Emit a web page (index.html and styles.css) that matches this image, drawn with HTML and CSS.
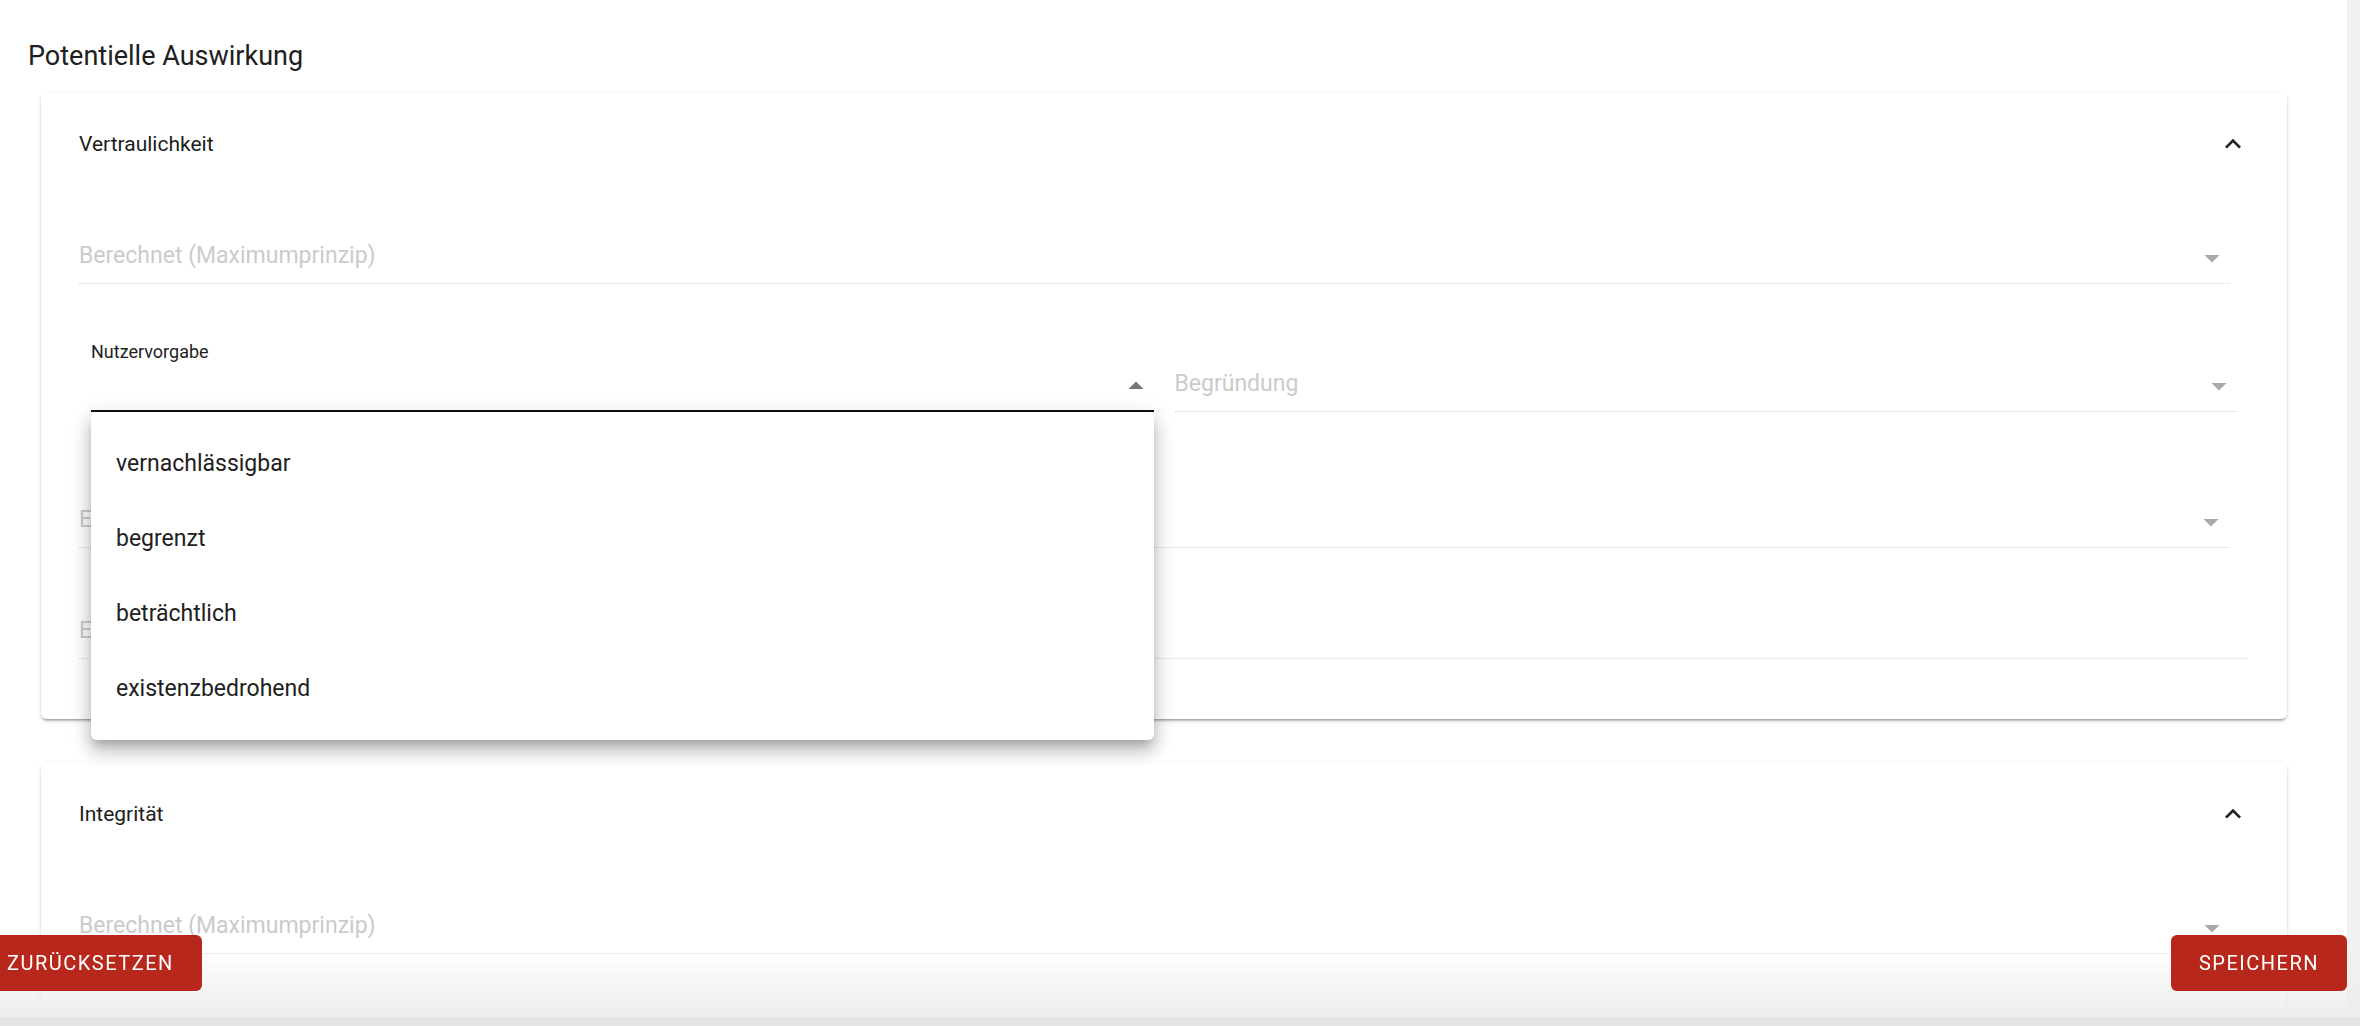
FILE: index.html
```html
<!DOCTYPE html>
<html lang="de">
<head>
    <meta charset="UTF-8">
    <meta name="viewport" content="width=device-width, initial-scale=1.0">
    <title>Potentielle Auswirkung</title>
    <link rel="stylesheet" href="styles.css">
</head>
<body>
    <div class="window">
        <div class="page">
            <h2 class="section-title">Potentielle Auswirkung</h2>

            <div class="panel">
                <div class="panel-head">
                    <span>Vertraulichkeit</span>
                    <svg class="expand" viewBox="0 0 24 24"><path d="M12 8l-6 6 1.41 1.41L12 10.83l4.59 4.58L18 14z"/></svg>
                </div>
                <div class="panel-body">
                    <div class="field calc">
                        <div class="input disabled">
                            <span class="placeholder">Berechnet (Maximumprinzip)</span>
                            <svg class="arrow" viewBox="0 0 24 24"><path d="M7 10l5 5 5-5z"/></svg>
                        </div>
                    </div>

                    <div class="field-row">
                        <div class="field user">
                            <label>Nutzervorgabe</label>
                            <div class="input focused">
                                <svg class="arrow open" viewBox="0 0 24 24"><path d="M7 14l5-5 5 5z"/></svg>
                            </div>
                            <ul class="menu">
                                <li>vernachlässigbar</li>
                                <li>begrenzt</li>
                                <li>beträchtlich</li>
                                <li>existenzbedrohend</li>
                            </ul>
                        </div>
                        <div class="field reason">
                            <div class="input disabled">
                                <span class="placeholder">Begründung</span>
                                <svg class="arrow" viewBox="0 0 24 24"><path d="M7 10l5 5 5-5z"/></svg>
                            </div>
                        </div>
                    </div>

                    <div class="field likelihood">
                        <div class="input disabled">
                            <span class="placeholder">Eintrittswahrscheinlichkeit</span>
                            <svg class="arrow" viewBox="0 0 24 24"><path d="M7 10l5 5 5-5z"/></svg>
                        </div>
                    </div>

                    <div class="field note">
                        <div class="input disabled">
                            <span class="placeholder">Erläuterung</span>
                        </div>
                    </div>
                </div>
            </div>

            <div class="panel open-end">
                <div class="panel-head">
                    <span>Integrität</span>
                    <svg class="expand" viewBox="0 0 24 24"><path d="M12 8l-6 6 1.41 1.41L12 10.83l4.59 4.58L18 14z"/></svg>
                </div>
                <div class="panel-body">
                    <div class="field calc">
                        <div class="input disabled">
                            <span class="placeholder">Berechnet (Maximumprinzip)</span>
                            <svg class="arrow" viewBox="0 0 24 24"><path d="M7 10l5 5 5-5z"/></svg>
                        </div>
                    </div>
                </div>
            </div>
        </div>
        <div class="scroll-track"></div>
    </div>

    <div class="actions">
        <div class="actions-bar">
            <button type="button" class="btn reset">Zurücksetzen</button>
            <button type="button" class="btn save">Speichern</button>
        </div>
        <div class="scroll-track-h"></div>
    </div>
</body>
</html>
```

FILE: styles.css
```css
html, body { margin: 0; height: 100%; overflow: hidden; background: #fff; }
body { font-family: Roboto, "Noto Sans", Arial, sans-serif; color: #212121; }

.window { display: flex; height: 100vh; }
.page { flex: 1; overflow: hidden; }
.scroll-track { width: 13px; background: #f1f1f1; }

.section-title { margin: 0; padding: 40px 0 0 28px; font-size: 27px; line-height: 32px; font-weight: 400; color: #202020; }

/* expansion panels */
.panel { margin: 21px 60px 0 41px; background: #fff; border-radius: 6px; box-shadow: 0 3px 2px -2px rgba(0,0,0,0.2), 0 2px 2px 0 rgba(0,0,0,0.14), 0 2px 5px 0 rgba(0,0,0,0.12); }
.panel + .panel { margin-top: 44px; }
.panel-head { height: 102px; padding: 0 38px; display: flex; align-items: center; justify-content: space-between; font-size: 21px; color: #1c1c1c; }
.expand { width: 32px; height: 32px; fill: #222; }
.panel-body { padding: 0 39px 60px 38px; }
.panel.open-end .panel-body { padding-bottom: 140px; }

/* select / text fields */
.field { position: relative; }
.field label { display: block; height: 22px; line-height: 22px; margin-bottom: -7px; font-size: 18px; color: #1e1e1e; }
.input { position: relative; height: 36px; padding: 9px 0; line-height: 36px; font-size: 23px; border-bottom: 1px dotted #d6d6d6; }
.input.focused { border-bottom: 2px solid #111; }
.placeholder { color: #cbcbcb; white-space: nowrap; }
.arrow { position: absolute; right: 0; top: calc(50% - 16px); width: 36px; height: 36px; fill: #a9a9a9; }
.arrow.open { top: calc(50% - 15px); fill: #757575; }

.field.calc { margin: 34px 18px 0 0; }
.field-row { display: flex; align-items: flex-end; gap: 21px; margin: 57px 11px 0 12px; }
.field-row .field { flex: 1; }
.field.likelihood { margin: 81px 19px 0 0; }
.field.note { margin-top: 56px; }

/* open dropdown list */
.menu { position: absolute; left: 0; right: 0; top: 100%; z-index: 5; margin: 0; padding: 14px 0; list-style: none; background: #fff; border-radius: 6px; box-shadow: 0 7px 8px -4px rgba(0,0,0,0.2), 0 12px 15px 2px rgba(0,0,0,0.14), 0 5px 21px 3px rgba(0,0,0,0.12); }
.menu li { height: 75px; line-height: 75px; padding: 0 25px; font-size: 23px; color: #212121; }

/* sticky footer with the two actions */
.actions { position: fixed; left: 0; right: 0; bottom: 0; z-index: 10; }
.actions-bar { height: 82px; padding-right: 13px; display: flex; justify-content: space-between; align-items: flex-start; background: linear-gradient(to bottom, rgba(238,238,238,0) 20%, #ededed 100%); }
.scroll-track-h { height: 9px; background: #e5e5e5; }
.btn { height: 56px; padding: 0 28px; border: none; border-radius: 6px; background: #b8271c; color: #fff; font-family: Roboto, Arial, sans-serif; font-size: 20px; letter-spacing: 1.5px; text-transform: uppercase; cursor: pointer; }
.btn.reset { margin-left: -21px; }
```
